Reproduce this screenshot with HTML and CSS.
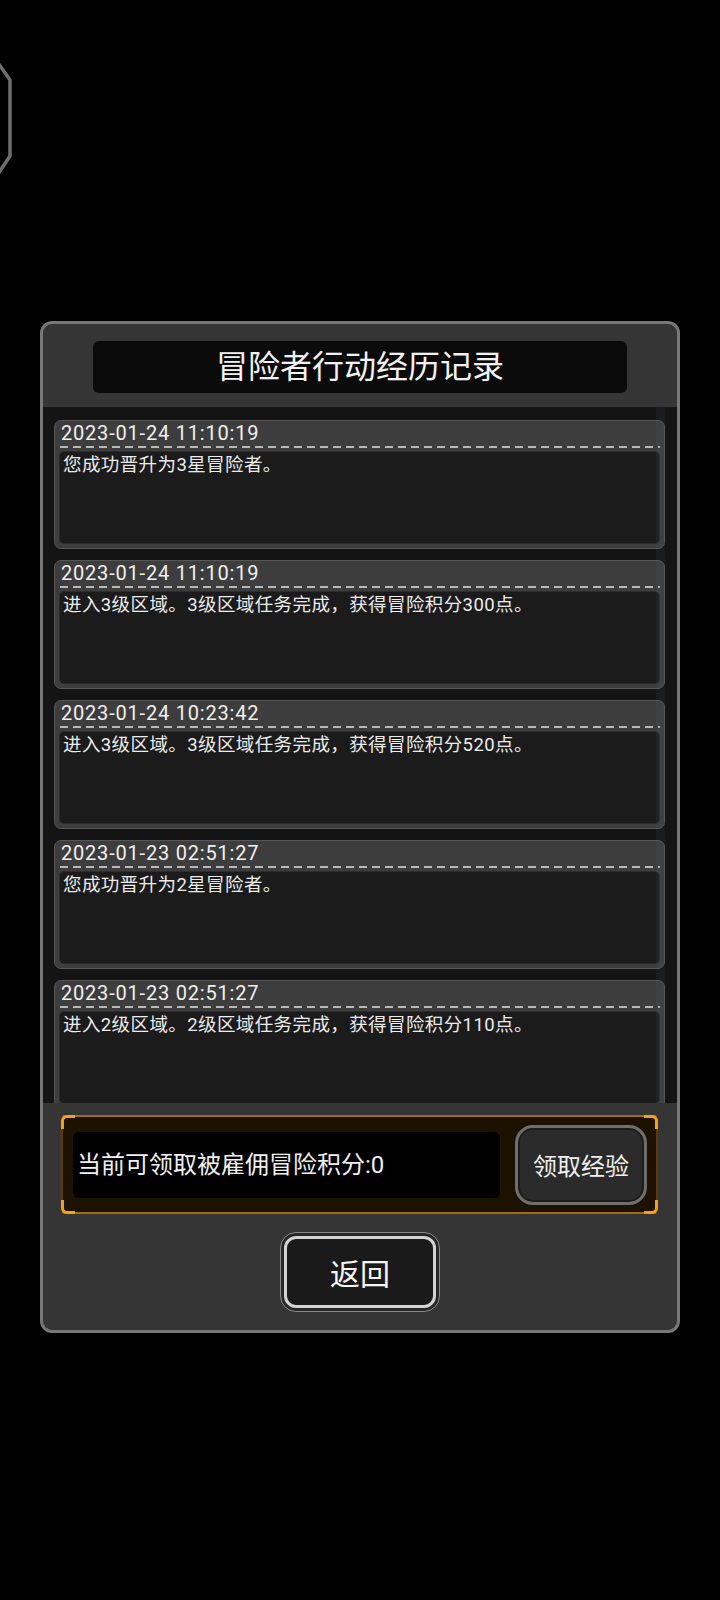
FILE: index.html
```
<!DOCTYPE html>
<html lang="zh">
<head>
<meta charset="utf-8">
<title>冒险者行动经历记录</title>
<link rel="stylesheet" href="styles.css">
</head>
<body>
<svg class="hex" width="16" height="124" viewBox="0 0 16 124">
  <polyline points="-2,3 10,20 10,96 -2,114" fill="none" stroke="#6e6e6e" stroke-width="3.5" stroke-linejoin="round"/>
</svg>
<div class="panel">
  <div class="title">冒险者行动经历记录</div>
  <div class="list">
    <div class="card">
      <div class="time">2023-01-24 11:10:19</div>
      <div class="dash"></div>
      <div class="msg">您成功晋升为3星冒险者。</div>
    </div>
    <div class="card">
      <div class="time">2023-01-24 11:10:19</div>
      <div class="dash"></div>
      <div class="msg">进入3级区域。3级区域任务完成，获得冒险积分300点。</div>
    </div>
    <div class="card">
      <div class="time">2023-01-24 10:23:42</div>
      <div class="dash"></div>
      <div class="msg">进入3级区域。3级区域任务完成，获得冒险积分520点。</div>
    </div>
    <div class="card">
      <div class="time">2023-01-23 02:51:27</div>
      <div class="dash"></div>
      <div class="msg">您成功晋升为2星冒险者。</div>
    </div>
    <div class="card">
      <div class="time">2023-01-23 02:51:27</div>
      <div class="dash"></div>
      <div class="msg">进入2级区域。2级区域任务完成，获得冒险积分110点。</div>
    </div>
    <div class="scrollbar"></div>
  </div>
  <div class="claim">
    <span class="corner tl"></span>
    <span class="corner tr"></span>
    <span class="corner bl"></span>
    <span class="corner br"></span>
    <div class="points">当前可领取被雇佣冒险积分:0</div>
    <div class="btn-claim">领取经验</div>
  </div>
  <div class="back-wrap">
    <div class="back"><span class="back-inner">返回</span></div>
  </div>
</div>
</body>
</html>
```
FILE: styles.css
```
* { box-sizing: border-box; }
body {
  margin: 0;
  width: 720px;
  height: 1600px;
  background: #000;
  position: relative;
  overflow: hidden;
  font-family: Roboto, "Noto Sans CJK SC", "Noto Sans", sans-serif;
  color: #eeeeee;
}
.hex { position: absolute; left: 0; top: 60px; }
.panel {
  margin: 321px 0 0 40px;
  width: 640px;
  height: 1012px;
  border: 3px solid #777;
  border-radius: 12px;
  background: #353535;
  display: flex;
  flex-direction: column;
}
.title {
  margin: 17px 50px 0;
  height: 52px;
  background: #0b0b0b;
  border-radius: 6px;
  text-align: center;
  font-size: 32px;
  line-height: 52px;
  color: #f2f2f2;
}
.list {
  margin-top: 14px;
  height: 696px;
  flex: none;
  background: #141414;
  padding: 13px 12px 0 11px;
  overflow: hidden;
  display: flex;
  flex-direction: column;
  gap: 11px;
  position: relative;
}
.card {
  flex: none;
  height: 129px;
  background: #3d3d3d;
  border: 1px solid #565656;
  border-radius: 7px;
  padding: 0 4px 4px;
  display: flex;
  flex-direction: column;
}
.time {
  height: 25px;
  font-size: 20px;
  line-height: 25px;
  padding-left: 2px;
  letter-spacing: 0.8px;
  color: #f0f0f0;
  white-space: nowrap;
}
.dash {
  height: 2px;
  margin: 0 0 3px 1px;
  background: repeating-linear-gradient(to right, #b8b8b8 0 8px, transparent 8px 13px);
}
.msg {
  flex: 1;
  background: #1b1b1b;
  border: 1px solid #2c2c2c;
  border-radius: 5px;
  padding: 1px 3px;
  font-size: 18.5px;
  line-height: 24px;
  letter-spacing: 0.4px;
  color: #ececec;
  white-space: nowrap;
}
.scrollbar {
  position: absolute;
  right: 12px;
  top: 0;
  bottom: 0;
  width: 9px;
  background: rgba(95, 105, 150, 0.1);
}
.claim {
  flex: none;
  margin: 12px 19px 0 18px;
  height: 99px;
  position: relative;
  background: #1d1200;
  border: 2px solid #5e3c08;
  border-top-color: #a36b10;
  border-bottom-color: #a36b10;
  border-radius: 4px;
  display: flex;
  align-items: center;
  padding: 0 9px 0 10px;
  gap: 15px;
}
.corner {
  position: absolute;
  width: 14px;
  height: 14px;
  border: 3px solid #f2a01e;
}
.tl { top: -2px; left: -2px; border-right: 0; border-bottom: 0; border-top-left-radius: 6px; }
.tr { top: -2px; right: -2px; border-left: 0; border-bottom: 0; border-top-right-radius: 6px; }
.bl { bottom: -2px; left: -2px; border-right: 0; border-top: 0; border-bottom-left-radius: 6px; }
.br { bottom: -2px; right: -2px; border-left: 0; border-top: 0; border-bottom-right-radius: 6px; }
.points {
  width: 427px;
  height: 66px;
  background: #000;
  border-radius: 6px;
  font-size: 24px;
  line-height: 66px;
  padding-left: 4px;
  color: #f0f0f0;
  white-space: nowrap;
}
.btn-claim {
  width: 132px;
  height: 80px;
  border: 3px solid #6e6e6e;
  border-radius: 18px;
  background: #2b2b2b;
  box-shadow: inset 0 0 0 2px #1c1c1c;
  font-size: 24px;
  display: flex;
  align-items: center;
  justify-content: center;
  color: #f0f0f0;
}
.back-wrap {
  margin-top: 18px;
  display: flex;
  justify-content: center;
}
.back {
  width: 160px;
  height: 80px;
  border: 1px solid #8a8a8a;
  border-radius: 16px;
  padding: 3px;
  background: #262626;
}
.back-inner {
  display: flex;
  height: 100%;
  align-items: center;
  justify-content: center;
  border: 3px solid #d2d2d2;
  border-radius: 12px;
  background: #1a1a1a;
  font-size: 30px;
  color: #f5f5f5;
}
```
